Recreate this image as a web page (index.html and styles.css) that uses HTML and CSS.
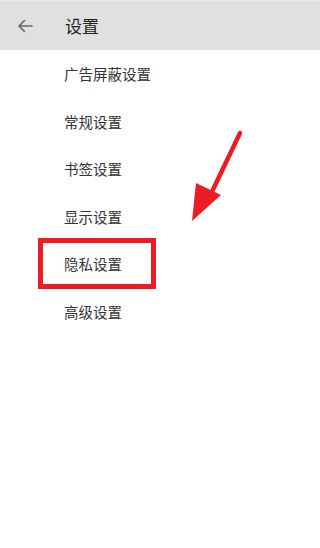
FILE: index.html
```html
<!DOCTYPE html>
<html>
<head>
  <meta charset="utf-8">
  <title>设置</title>
  <link rel="stylesheet" href="styles.css">
</head>
<body>
  <div class="page">
    <div class="header">
      <div class="backBtn">
        <svg width="16" height="14" viewBox="0 0 16 14">
          <path d="M15 7H2M7.5 1.5L2 7l5.5 5.5" fill="none" stroke="#666" stroke-width="1.6" stroke-linecap="round" stroke-linejoin="round"/>
        </svg>
      </div>
      <div class="title">设置</div>
    </div>

    <div class="menu">
      <div class="menuItem">广告屏蔽设置</div>
      <div class="menuItem">常规设置</div>
      <div class="menuItem">书签设置</div>
      <div class="menuItem">显示设置</div>
      <div class="menuItem">隐私设置</div>
      <div class="menuItem">高级设置</div>
    </div>

    <div class="highlight"></div>
    <svg class="pointer" width="60" height="100" viewBox="0 0 60 100">
      <line x1="53" y1="5" x2="22" y2="70" stroke="#ed1c24" stroke-width="4.5" stroke-linecap="round"/>
      <polygon points="5,93 9,55 34,67" fill="#ed1c24"/>
    </svg>
  </div>
</body>
</html>
```

FILE: styles.css
```css
body {
  margin: 0;
  background: #fff;
  font-family: "Noto Sans CJK SC", "Noto Sans", sans-serif;
}

.page {
  position: relative;
  width: 320px;
  height: 548px;
  overflow: hidden;
}

.header {
  display: flex;
  align-items: center;
  height: 50px;
  background-color: #e0e0e0;
  border-top: 1px solid #e8e8e8;
  box-sizing: border-box;
}

.backBtn {
  width: 65px;
  display: flex;
  padding-left: 17px;
  box-sizing: border-box;
}

.backBtn svg {
  display: block;
}

.title {
  font-size: 17px;
  color: #222;
}

.menu {
  padding-top: 0;
}

.menuItem {
  height: 47.6px;
  line-height: 47.6px;
  padding-left: 64px;
  font-size: 14.5px;
  color: #333;
}

.highlight {
  position: absolute;
  left: 38px;
  top: 238px;
  width: 118px;
  height: 51px;
  border: 5px solid #ed1c24;
  box-sizing: border-box;
}

.pointer {
  position: absolute;
  left: 187px;
  top: 128px;
}
```
